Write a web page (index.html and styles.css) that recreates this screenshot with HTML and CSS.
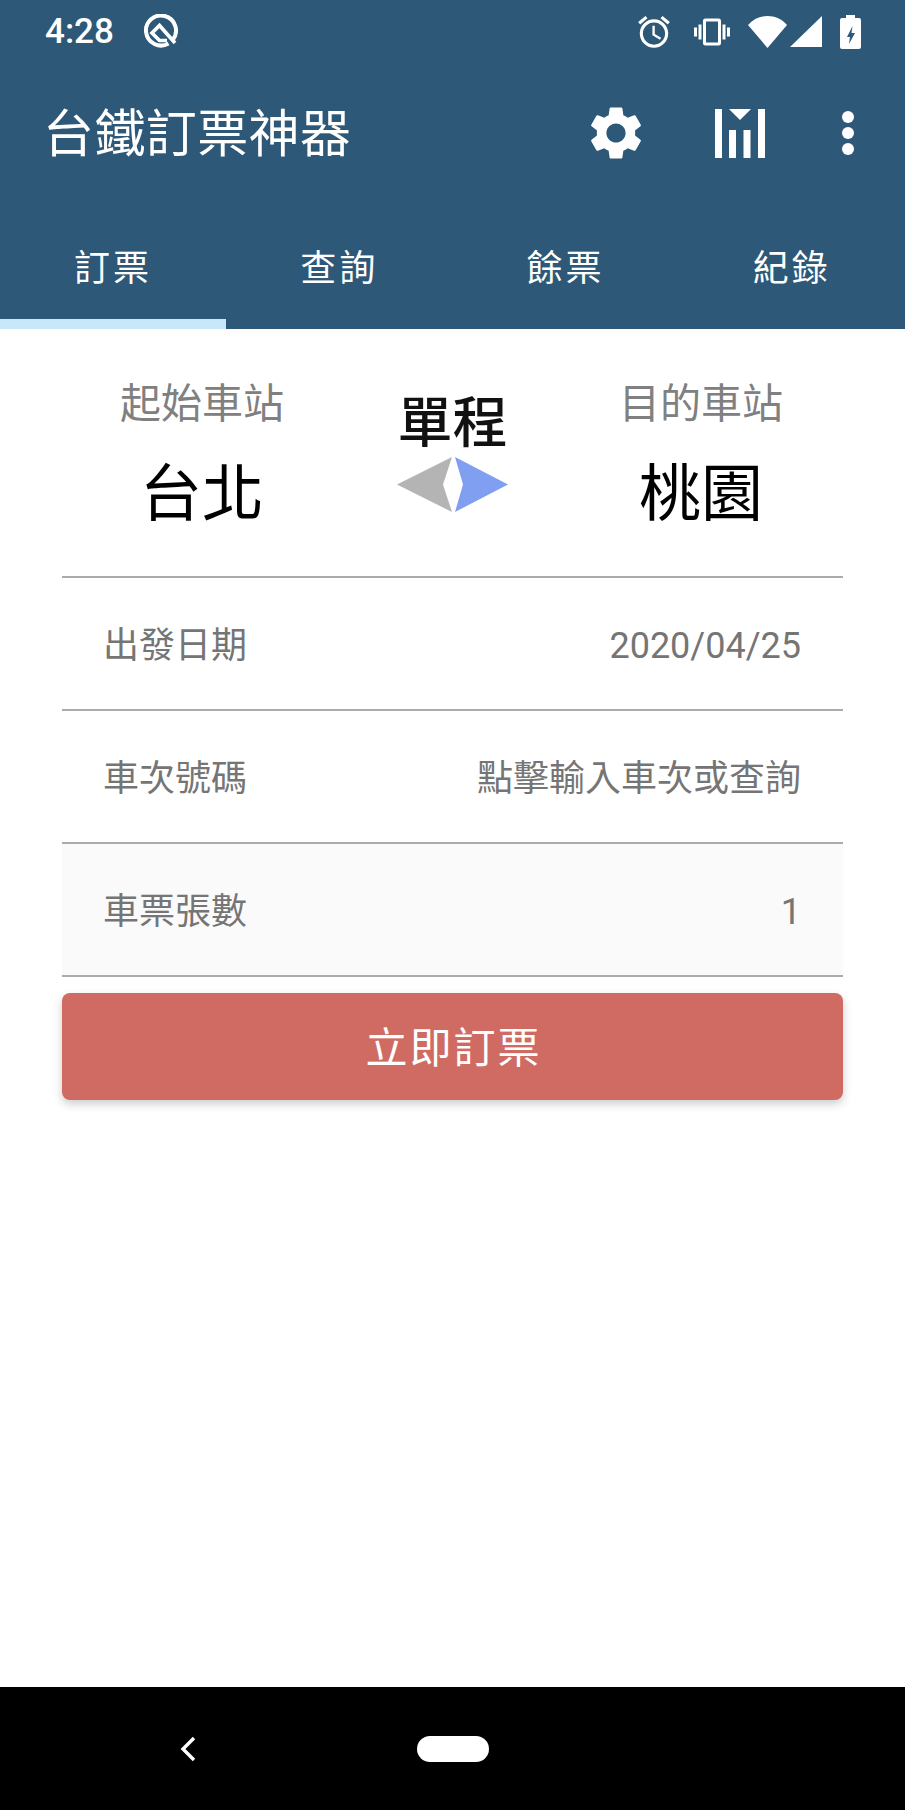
FILE: index.html
```html
<!DOCTYPE html>
<html lang="zh-Hant">
<head>
    <meta charset="UTF-8">
    <meta name="viewport" content="width=device-width, initial-scale=1.0">
    <title>台鐵訂票神器</title>
    <link rel="stylesheet" href="styles.css">
</head>
<body>
    <div class="screen">
        <header class="app-header">
            <div class="status-bar">
                <span class="clock">4:28</span>
                <svg class="q-logo" viewBox="0 0 36 36">
                    <path d="M26.5 29.5A15 15 0 1 1 31 25.5" fill="none" stroke="#fff" stroke-width="4"/>
                    <path d="M25 26.5H17.5L10 19L17.5 11.5L33 29" fill="none" stroke="#fff" stroke-width="3.6"/>
                </svg>
                <div class="status-icons">
                    <svg class="ic-alarm" viewBox="0 0 24 24"><path fill="#fff" d="M22 5.72l-4.6-3.86-1.29 1.53 4.6 3.86L22 5.72zM7.88 3.39L6.6 1.86 2 5.71l1.29 1.53 4.59-3.85zM12.5 8H11v6l4.75 2.85.75-1.23-4-2.37V8zM12 4c-4.97 0-9 4.03-9 9s4.02 9 9 9c4.97 0 9-4.03 9-9s-4.03-9-9-9zm0 16c-3.87 0-7-3.13-7-7s3.13-7 7-7 7 3.13 7 7-3.13 7-7 7z"/></svg>
                    <svg class="ic-vibrate" viewBox="0 0 24 24"><path fill="#fff" d="M0 15h2V9H0v6zm3 2h2V7H3v10zm19-8v6h2V9h-2zm-3 8h2V7h-2v10zM16.5 3h-9C6.67 3 6 3.67 6 4.5v15c0 .83.67 1.5 1.5 1.5h9c.83 0 1.5-.67 1.5-1.5v-15c0-.83-.67-1.5-1.5-1.5zM16 19H8V5h8v14z"/></svg>
                    <svg class="ic-wifi" viewBox="0 0 39 32"><path fill="#fff" d="M0 9C5 3 12 0 19.5 0S34 3 39 9L19.5 32z"/></svg>
                    <svg class="ic-signal" viewBox="0 0 32 31"><path fill="#fff" d="M32 0V31H0z"/></svg>
                    <svg class="ic-battery" viewBox="0 0 21 34"><path fill="#fff" fill-rule="evenodd" d="M6 0H15V3H19Q21 3 21 5V32Q21 34 19 34H2Q0 34 0 32V5Q0 3 2 3H6zM12.5 11L7 22H10L9 29L15 18H11.5z"/></svg>
                </div>
            </div>
            <div class="toolbar">
                <h1 class="app-title">台鐵訂票神器</h1>
                <svg class="ic-gear" viewBox="0 0 24 24"><path fill="#fff" d="M19.14 12.94c.04-.3.06-.61.06-.94 0-.32-.02-.64-.07-.94l2.03-1.58c.18-.14.23-.41.12-.61l-1.92-3.32c-.12-.22-.37-.29-.59-.22l-2.39.96c-.5-.38-1.03-.7-1.62-.94l-.36-2.54c-.04-.24-.24-.41-.48-.41h-3.84c-.24 0-.43.17-.47.41l-.36 2.54c-.59.24-1.13.57-1.62.94l-2.39-.96c-.22-.08-.47 0-.59.22L2.74 8.87c-.12.21-.08.47.12.61l2.03 1.58c-.05.3-.09.63-.09.94s.02.64.07.94l-2.03 1.58c-.18.14-.23.41-.12.61l1.92 3.32c.12.22.37.29.59.22l2.39-.96c.5.38 1.03.7 1.62.94l.36 2.54c.05.24.24.41.48.41h3.84c.24 0 .44-.17.47-.41l.36-2.54c.59-.24 1.13-.56 1.62-.94l2.39.96c.22.08.47 0 .59-.22l1.92-3.32c.12-.22.07-.47-.12-.61l-2.01-1.58zM12 15.6c-1.98 0-3.6-1.62-3.6-3.6s1.62-3.6 3.6-3.6 3.6 1.62 3.6 3.6-1.62 3.6-3.6 3.6z"/></svg>
                <svg class="ic-chart" viewBox="0 0 50 49"><path fill="#fff" d="M0 0H7V49H0zM14 21H21V49H14zM28.5 21H35.5V49H28.5zM43 0H50V49H43zM14 0H36L25 11z"/></svg>
                <div class="more-dots"><span></span><span></span><span></span></div>
            </div>
            <nav class="tabs">
                <div class="tab tab-active">訂票</div>
                <div class="tab">查詢</div>
                <div class="tab">餘票</div>
                <div class="tab">紀錄</div>
            </nav>
        </header>

        <main class="content">
            <section class="route">
                <div class="station">
                    <div class="station-label">起始車站</div>
                    <div class="station-name">台北</div>
                </div>
                <div class="trip-type">
                    <div class="trip-label">單程</div>
                    <svg class="trip-arrows" viewBox="0 0 111 55">
                        <path fill="#b4b4b4" d="M0 27.5L55 0L46 27.5L55 55z"/>
                        <path fill="#819ff0" d="M58 0L111 27.5L58 55L66 27.5z"/>
                    </svg>
                </div>
                <div class="station">
                    <div class="station-label">目的車站</div>
                    <div class="station-name">桃園</div>
                </div>
            </section>

            <div class="row">
                <span>出發日期</span>
                <span class="row-number">2020/04/25</span>
            </div>
            <div class="row">
                <span>車次號碼</span>
                <span>點擊輸入車次或查詢</span>
            </div>
            <div class="row row-pressed">
                <span>車票張數</span>
                <span class="row-number">1</span>
            </div>
            <button class="book-btn" type="button">立即訂票</button>
        </main>

        <footer class="nav-bar">
            <svg class="nav-back" viewBox="0 0 16 26"><path d="M14 2L3 13L14 24" fill="none" stroke="#fff" stroke-width="3.4"/></svg>
            <div class="nav-home"></div>
        </footer>
    </div>
</body>
</html>
```

FILE: styles.css
```css
* {
    box-sizing: border-box;
}

body {
    margin: 0;
    background: #fff;
    font-family: Roboto, "Noto Sans CJK TC", sans-serif;
}

.screen {
    display: flex;
    flex-direction: column;
    width: 905px;
    height: 1810px;
    overflow: hidden;
}

.app-header {
    background: #2d5877;
    color: #fff;
    height: 329px;
    flex: none;
}

.status-bar {
    display: flex;
    align-items: center;
    height: 63px;
    padding-left: 45px;
}

.clock {
    font-size: 35px;
    font-weight: 500;
    width: 97px;
}

.q-logo {
    width: 36px;
    height: 36px;
}

.status-icons {
    display: flex;
    align-items: center;
    margin-left: auto;
    padding-right: 44px;
}

.ic-alarm {
    width: 38px;
    height: 38px;
}

.ic-vibrate {
    width: 36px;
    height: 36px;
    margin-left: 21px;
}

.ic-wifi {
    width: 39px;
    height: 32px;
    margin-left: 18px;
}

.ic-signal {
    width: 32px;
    height: 31px;
    margin-left: 3px;
}

.ic-battery {
    width: 21px;
    height: 34px;
    margin-left: 18px;
}

.toolbar {
    display: flex;
    align-items: center;
    height: 140px;
    padding-left: 43px;
}

.app-title {
    flex: 1;
    margin: 0;
    padding-top: 3px;
    font-size: 51px;
    font-weight: 400;
    line-height: 60px;
    letter-spacing: 0.4px;
}

.ic-gear {
    width: 64px;
    height: 64px;
}

.ic-chart {
    width: 50px;
    height: 49px;
    margin-left: 67px;
}

.more-dots {
    display: flex;
    flex-direction: column;
    gap: 4px;
    margin-left: 77px;
    margin-right: 51px;
}

.more-dots span {
    width: 12px;
    height: 12px;
    border-radius: 50%;
    background: #fff;
}

.tabs {
    display: grid;
    grid-template-columns: repeat(4, 1fr);
    height: 126px;
}

.tab {
    height: 126px;
    padding-top: 41px;
    text-align: center;
    font-size: 36px;
    line-height: 50px;
    letter-spacing: 3px;
}

.tab-active {
    border-bottom: 10px solid #c9e7fb;
}

.content {
    flex: 1;
    padding: 0 62px;
}

.route {
    display: grid;
    grid-template-columns: 280px 221px 276px;
    height: 249px;
    border-bottom: 2px solid #ababab;
}

.station {
    text-align: center;
    padding-top: 46px;
}

.station-label {
    font-size: 41px;
    line-height: 58px;
    color: #808080;
}

.station-name {
    margin-top: 22px;
    font-size: 62px;
    line-height: 80px;
    color: #000;
}

.trip-type {
    display: flex;
    flex-direction: column;
    align-items: center;
    padding-top: 62px;
}

.trip-label {
    font-size: 55px;
    font-weight: 500;
    line-height: 64px;
    color: #111;
}

.trip-arrows {
    width: 113px;
    height: 55px;
    margin-top: 2px;
}

.row {
    display: flex;
    justify-content: space-between;
    align-items: center;
    height: 133px;
    padding: 0 42px 3px 41px;
    border-bottom: 2px solid #ababab;
    font-size: 36px;
    color: #757575;
}

.row-number {
    padding-top: 8px;
}

.row-pressed {
    background: #fafafa;
}

.book-btn {
    display: block;
    width: 100%;
    height: 107px;
    margin-top: 16px;
    padding: 0 0 4px 2px;
    border: none;
    border-radius: 8px;
    background: #cf6b62;
    box-shadow: 0 4px 10px rgba(0, 0, 0, 0.2);
    color: #fff;
    font-family: inherit;
    font-size: 42px;
    letter-spacing: 2px;
}

.nav-bar {
    display: flex;
    align-items: center;
    height: 123px;
    flex: none;
    background: #000;
}

.nav-back {
    width: 16px;
    height: 26px;
    margin-left: 180px;
}

.nav-home {
    width: 72px;
    height: 26px;
    margin-left: 221px;
    border-radius: 13px;
    background: #fff;
}
```
